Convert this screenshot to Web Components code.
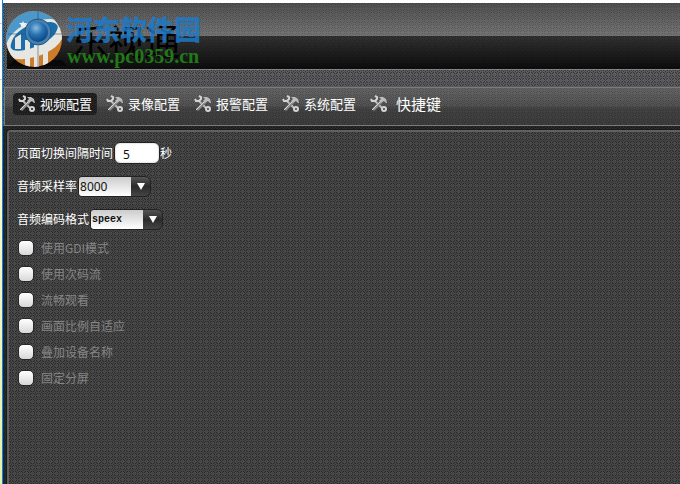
<!DOCTYPE html>
<html lang="zh-CN">
<head>
<meta charset="utf-8">
<title>乐视通</title>
<style>
  * { box-sizing: border-box; }
  html, body { height: 100%; }
  body {
    margin: 0;
    background: #fff;
    font: 12px/18px "Noto Sans CJK SC", "Noto Sans", sans-serif;
    color: #fff;
    /* small woven flower, repeated every 6px */
    --weave: url("data:image/svg+xml,%3Csvg xmlns='http://www.w3.org/2000/svg' width='6' height='6' shape-rendering='crispEdges'%3E%3Cpath fill='%23000' fill-opacity='.42' d='M1 0h1v1h-1zM3 0h1v1h-1zM0 1h1v1h-1zM4 1h1v1h-1zM2 2h1v1h-1zM0 3h1v1h-1zM4 3h1v1h-1zM1 4h1v1h-1zM3 4h1v1h-1z'/%3E%3Cpath fill='%23000' fill-opacity='.16' d='M1 1h1v1h-1zM3 1h1v1h-1zM1 3h1v1h-1zM3 3h1v1h-1zM5 5h1v1h-1zM5 2h1v1h-1zM2 5h1v1h-1z'/%3E%3C/svg%3E");
    --weave-soft: url("data:image/svg+xml,%3Csvg xmlns='http://www.w3.org/2000/svg' width='6' height='6' shape-rendering='crispEdges'%3E%3Cpath fill='%23000' fill-opacity='.18' d='M1 0h1v1h-1zM3 0h1v1h-1zM0 1h1v1h-1zM4 1h1v1h-1zM2 2h1v1h-1zM0 3h1v1h-1zM4 3h1v1h-1zM1 4h1v1h-1zM3 4h1v1h-1z'/%3E%3C/svg%3E");
  }
</style>
</head>
<body>
<app-window>
  <app-banner slot="banner" name="乐视通" site="河东软件园" url="www.pc0359.cn"></app-banner>
  <tab-bar slot="tabs">
    <tab-item active>视频配置</tab-item>
    <tab-item>录像配置</tab-item>
    <tab-item>报警配置</tab-item>
    <tab-item>系统配置</tab-item>
    <tab-item wide>快捷键</tab-item>
  </tab-bar>
  <number-field label="页面切换间隔时间" value="5">秒</number-field>
  <select-field label="音频采样率" options="8000,16000"></select-field>
  <select-field label="音频编码格式" options="speex,g711" mono></select-field>
  <check-list>
    <check-option>使用GDI模式</check-option>
    <check-option>使用次码流</check-option>
    <check-option>流畅观看</check-option>
    <check-option>画面比例自适应</check-option>
    <check-option>叠加设备名称</check-option>
    <check-option>固定分屏</check-option>
  </check-list>
</app-window>

<script>
"use strict";

////////////////////////////////////////////
// Helpers
const mount = (el, html) => {
  const root = el.attachShadow({ mode: "open" });
  root.innerHTML = `<style>*{box-sizing:border-box}</style>${html}`;
  return root;
};

////////////////////////////////////////////
// Window frame
class AppWindow extends HTMLElement {
  constructor() {
    super();
    mount(this, `
      <style>
        :host {
          display: grid;
          grid-template-columns: 2px 1px 1fr;
          min-height: 100vh;
        }
        .desktop { background: linear-gradient(#fff 23px, #ccc 23px 24px, #fff 24px 79px, #ccc 79px 80px, #ffffe1 80px, #e5f0b0); }
        .edge { background: #0a84e6; }
        .frame {
          display: flex;
          flex-direction: column;
          margin-top: 3px;
          background: var(--weave), #5e5e60;
        }
        .body {
          flex: 1;
          display: flex;
          flex-direction: column;
          align-items: flex-start;
          margin: 4px 0 0 4px;
          padding: 10px 8px;
          border: solid #606060;
          border-width: 2px 0 0 2px;
          border-top-left-radius: 3px;
          outline: 1px solid #1b1b1b;
          background: var(--weave), #494949;
        }
        .lower {
          flex: 1;
          display: flex;
          flex-direction: column;
          background: var(--weave), #2b2b2b;
        }
        ::slotted(select-field) { margin-top: 11px; }
        ::slotted(check-list) { margin-top: 5px; }
      </style>
      <div class="desktop"></div>
      <div class="edge"></div>
      <div class="frame">
        <slot name="banner"></slot>
        <slot name="tabs"></slot>
        <div class="lower"><main class="body"><slot></slot></main></div>
      </div>
    `);
  }
}

////////////////////////////////////////////
// Banner with the emblem and the overlapping names
class AppBanner extends HTMLElement {
  constructor() {
    super();
    mount(this, `
      <style>
        :host {
          position: relative;
          display: block;
          height: 67px;
          margin: 0 0 17px 4px;
          border-bottom: 1px solid #858585;
          background: var(--weave-soft), linear-gradient(#505050 0, #747474 33px, #323232 33px, #0c0c0c 100%);
        }
        svg { position: absolute; left: -4px; top: 5px; }
        span { position: absolute; white-space: nowrap; }
        .name { left: 65px; top: 15px; font-size: 36px; line-height: 44px; color: #000; }
        .site { left: 59px; top: 8px; font-size: 27px; line-height: 36px; font-weight: 900; color: #1c7ac8; opacity: .85; }
        .url { left: 60px; top: 41px; font: bold 20px/24px "Liberation Serif", serif; color: #217818; }
      </style>
      <span class="name">${this.getAttribute("name")}</span>
      <svg width="66" height="62" viewBox="3 8 66 62" aria-hidden="true">
        <defs>
          <clipPath id="disc"><circle cx="34" cy="39" r="28"/></clipPath>
          <radialGradient id="ball" cx=".4" cy=".3" r=".75">
            <stop offset="0" stop-color="#8cbbe2"/><stop offset=".45" stop-color="#2a75b4"/><stop offset="1" stop-color="#08407c"/>
          </radialGradient>
        </defs>
        <path d="M14 60h48l5 6H8z" fill="#080808"/>
        <g clip-path="url(#disc)">
          <rect x="5" y="10" width="60" height="60" fill="#cf7c28"/>
          <path d="M5 46V10h55v18C44 20 12 30 8 50z" fill="#4c98cb"/>
          <path d="M6 46C9 30 30 19 50 19c8 0 12 4 12 14v6c-7 12-22 18-38 20-8 1-14-1-18-5z" fill="#e6e6e2"/>
          <path d="M11 44c2-10 12-17 24-21l16-1c6 1 8 4 6 8-3 8-12 13-22 17-8 3-17 5-22 3-2-1-3-3-2-6z" fill="#1a6dab"/>
          <path d="M15 38l6-4v15h-6zM25 40h5v28h-5zM34 45h5v23h-5zM43 42h5v24h-5z" fill="#e6e6e2"/>
        </g>
        <circle cx="38" cy="32" r="13" fill="#4480b0" stroke="#245883"/>
        <circle cx="38" cy="32" r="10" fill="url(#ball)"/>
        <path d="M38 11v9M38 46v20M8 34h16M52 34h10" stroke="#304b60" opacity=".55"/>
        <path d="M23 21l1 2 3 0-2 2 1 2-3-1-2 1 0-2-2-2 3 0z" fill="#edf2f4"/>
      </svg>
      <span class="site">${this.getAttribute("site")}</span>
      <span class="url">${this.getAttribute("url")}</span>
    `);
  }
}

////////////////////////////////////////////
// Tabs
class TabBar extends HTMLElement {
  constructor() {
    super();
    mount(this, `
      <style>
        :host {
          display: flex;
          align-items: flex-start;
          gap: 4px;
          height: 39px;
          margin-left: 1px;
          padding: 5px 9px 0 8px;
          border: 1px solid #7b7b7b;
          border-right: 0;
          background: var(--weave-soft), linear-gradient(#646464 0, #525252 17px, #424242 21px, #3c3c3c 100%);
        }
      </style>
      <slot></slot>
    `);
  }
}

class TabItem extends HTMLElement {
  constructor() {
    super();
    mount(this, `
      <style>
        :host { display: block; }
        button {
          display: flex;
          align-items: center;
          gap: 4px;
          height: 22px;
          padding: 0 5px;
          border: 0;
          border-radius: 4px;
          background: none;
          color: #fff;
          font: 13px/20px "Noto Sans CJK SC", sans-serif;
          white-space: nowrap;
        }
        :host([active]) button { background: var(--weave), #252525; }
        :host([wide]) button { gap: 8px; font-size: 15px; }
      </style>
      <button type="button">
        <svg width="18" height="18" viewBox="0 0 18 18" fill="none" aria-hidden="true">
          <path d="M5 6l7 7" stroke="#bdbdbd" stroke-width="2"/>
          <path d="M1 4l1 2h3l2-2V2L5 1" stroke="#d4d4d4" stroke-width="2"/>
          <circle cx="14" cy="14" r="2" stroke="#d4d4d4" stroke-width="2"/>
          <path d="M11 7L3 15" stroke="#8c8c8c" stroke-width="3"/>
          <path d="M11 6L2 15" stroke="#d8d8d8"/>
          <path d="M9 2l4 0 3 2 1 4-1 0-2-2-3 2-2-2 2-2z" fill="#bcbcbc"/>
        </svg>
        <slot></slot>
      </button>
    `);
  }
}

////////////////////////////////////////////
// Fields
class NumberField extends HTMLElement {
  constructor() {
    super();
    mount(this, `
      <style>
        :host { display: flex; align-items: center; height: 22px; }
        label { margin-right: 1px; }
        input {
          width: 46px;
          height: 22px;
          padding: 2px 0 0 8px;
          border: 1px solid #222;
          border-radius: 6px;
          background: #fff;
          box-shadow: inset 0 0 2px #aaa;
          color: #111;
          font: 12px "Noto Sans", sans-serif;
        }
      </style>
      <label for="field">${this.getAttribute("label")}</label>
      <input id="field" type="text" inputmode="numeric" value="${this.getAttribute("value")}">
      <slot></slot>
    `);
  }
}

class SelectField extends HTMLElement {
  constructor() {
    super();
    const options = this.getAttribute("options").split(",");
    mount(this, `
      <style>
        :host { display: flex; align-items: center; height: 22px; }
        label { margin-right: 1px; }
        .box {
          display: grid;
          grid-template-columns: 53px 18px;
          height: 21px;
          border: 1px solid #222;
          border-radius: 4px 6px 6px 4px;
          overflow: hidden;
          background: linear-gradient(#555, #2b2b2b 50%, #444);
        }
        select {
          grid-area: 1 / 1 / 2 / 3;
          appearance: none;
          margin: 0;
          padding: 0 18px 0 1px;
          border: 0;
          border-radius: 0;
          background: linear-gradient(#ccc, #fff) 0 0 / 52px 100% no-repeat;
          color: #111;
          font: 12px "Noto Sans", sans-serif;
        }
        :host([mono]) select { font: bold 10px "Liberation Mono", monospace; }
        svg { grid-area: 1 / 2; place-self: center; pointer-events: none; }
      </style>
      <label for="field">${this.getAttribute("label")}</label>
      <div class="box">
        <select id="field">${options.map((o) => `<option>${o}</option>`).join("")}</select>
        <svg width="10" height="8" viewBox="0 0 10 8" aria-hidden="true"><path d="M1 1h8L5 8z" fill="#fff"/></svg>
      </div>
    `);
  }
}

////////////////////////////////////////////
// Check boxes
class CheckList extends HTMLElement {
  constructor() {
    super();
    mount(this, `
      <style>:host { display: flex; flex-direction: column; }</style>
      <slot></slot>
    `);
  }
}

class CheckOption extends HTMLElement {
  constructor() {
    super();
    mount(this, `
      <style>
        :host { display: block; color: #858585; }
        label { display: flex; align-items: center; gap: 7px; height: 26px; }
        input {
          appearance: none;
          width: 16px;
          height: 16px;
          margin: 0 0 0 1px;
          border: 1px solid #292929;
          border-radius: 5px;
          background: linear-gradient(#fff, #d8d8d8);
        }
        input:checked { background: #8ac; }
      </style>
      <label><input type="checkbox"><slot></slot></label>
    `);
  }
}

////////////////////////////////////////////
// Registration
customElements.define("app-window", AppWindow);
customElements.define("app-banner", AppBanner);
customElements.define("tab-bar", TabBar);
customElements.define("tab-item", TabItem);
customElements.define("number-field", NumberField);
customElements.define("select-field", SelectField);
customElements.define("check-list", CheckList);
customElements.define("check-option", CheckOption);
</script>
</body>
</html>
